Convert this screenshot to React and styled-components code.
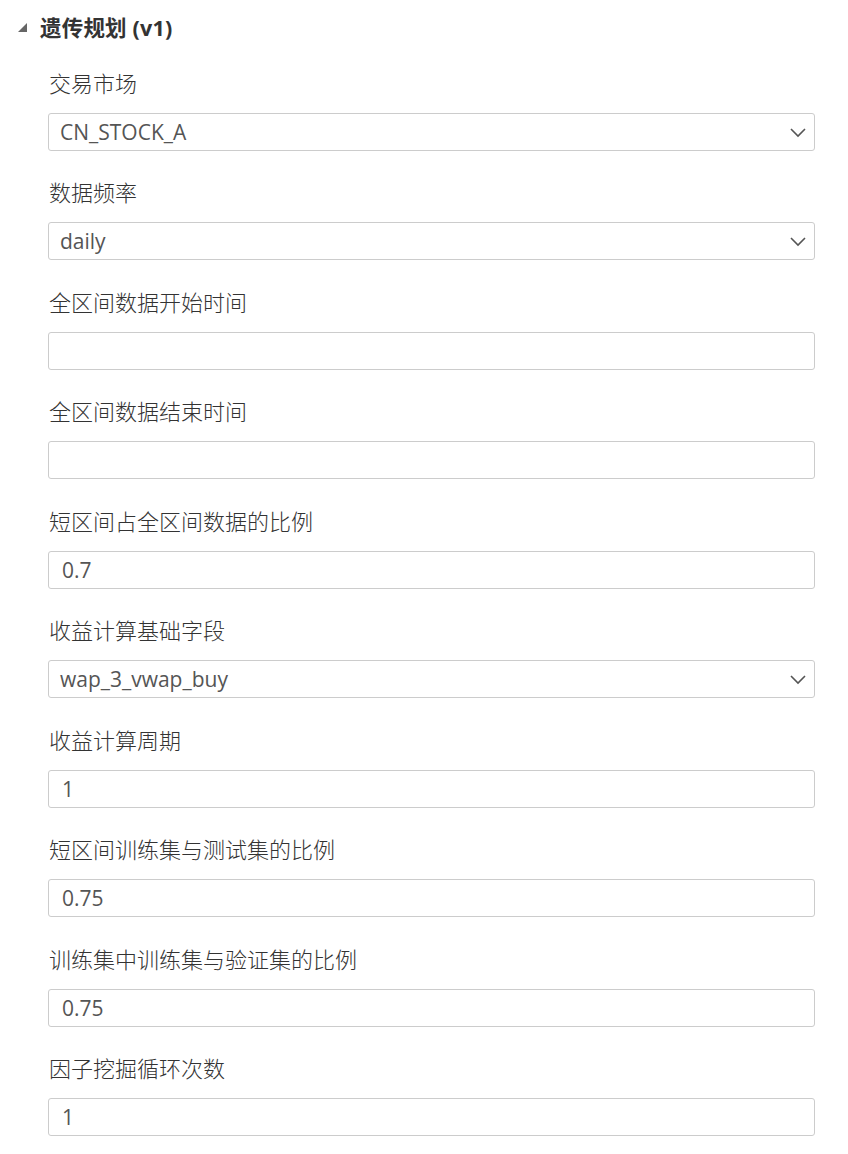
import styled, { createGlobalStyle } from "styled-components";

const GlobalStyle = createGlobalStyle`
  body {
    margin: 0;
    background: #fff;
    font-family: "Open Sans", "Noto Sans CJK SC", sans-serif;
  }
`;

const Panel = styled.div`
  width: 848px;
  padding-top: 9px;
`;

const Header = styled.div`
  display: flex;
  align-items: center;
  height: 34px;
  padding-left: 16px;
  color: #333;
`;

const Caret = styled.svg`
  width: 12px;
  height: 12px;
  margin-right: 12px;
  margin-top: 2px;
`;

const Title = styled.span`
  font-size: 21.5px;
  font-weight: 700;
  letter-spacing: 0.2px;
`;

const Fields = styled.div`
  display: flex;
  flex-direction: column;
  gap: 27.44px;
  padding: 26px 33px 0 48px;
`;

const Field = styled.div`
  display: flex;
  flex-direction: column;
`;

const Label = styled.label`
  font-size: 22px;
  font-weight: 300;
  line-height: 28px;
  color: #333;
  padding-left: 1px;
  margin-bottom: 16px;
`;

const Box = styled.div`
  position: relative;
  height: 38px;
  box-sizing: border-box;
  border: 1px solid #ccc;
  border-radius: 3px;
  display: flex;
  align-items: center;
  padding-left: ${(p) => (p.$select ? "11px" : "13px")};
  font-size: 21px;
  color: #555;
`;

const Chevron = styled.svg`
  position: absolute;
  right: 7px;
  top: 11px;
  width: 18px;
  height: 14px;
`;

const fields = [
  { label: "交易市场", value: "CN_STOCK_A", select: true },
  { label: "数据频率", value: "daily", select: true },
  { label: "全区间数据开始时间", value: "" },
  { label: "全区间数据结束时间", value: "" },
  { label: "短区间占全区间数据的比例", value: "0.7" },
  { label: "收益计算基础字段", value: "wap_3_vwap_buy", select: true },
  { label: "收益计算周期", value: "1" },
  { label: "短区间训练集与测试集的比例", value: "0.75" },
  { label: "训练集中训练集与验证集的比例", value: "0.75" },
  { label: "因子挖掘循环次数", value: "1" },
];

export default function App() {
  return (
    <>
      <GlobalStyle />
      <Panel>
        <Header>
          <Caret viewBox="0 0 12 12">
            <path d="M11 2 L11 11 L2 11 Z" fill="#666" />
          </Caret>
          <Title>遗传规划 (v1)</Title>
        </Header>
        <Fields>
          {fields.map((f) => (
            <Field key={f.label}>
              <Label>{f.label}</Label>
              <Box $select={f.select}>
                {f.value}
                {f.select && (
                  <Chevron viewBox="0 0 18 14">
                    <path d="M2 4 L9 11 L16 4" fill="none" stroke="#555" strokeWidth="1.6" />
                  </Chevron>
                )}
              </Box>
            </Field>
          ))}
        </Fields>
      </Panel>
    </>
  );
}
